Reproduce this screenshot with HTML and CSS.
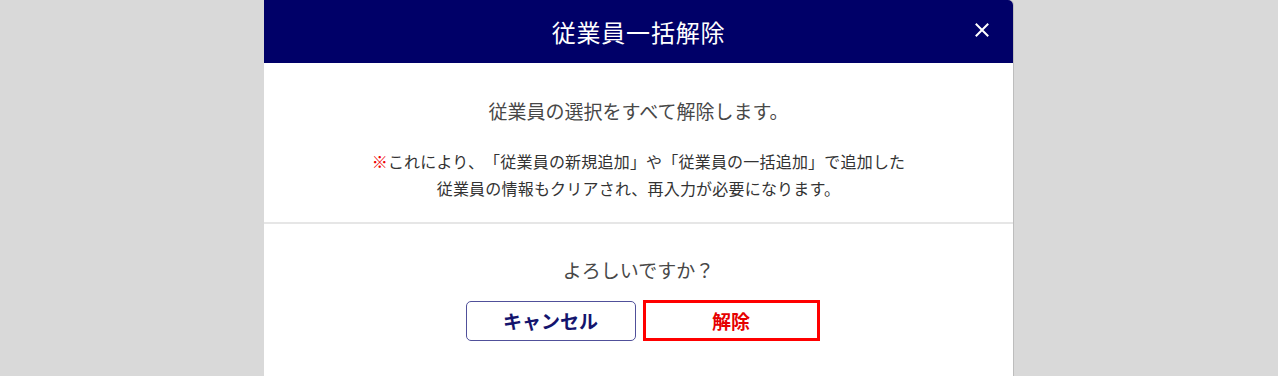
FILE: index.html
```html
<!DOCTYPE html>
<html lang="ja">
<head>
<meta charset="utf-8">
<link rel="stylesheet" href="styles.css">
</head>
<body>
<div class="modal">
  <div class="modal-header">
    <h1 class="title">従業員一括解除</h1>
    <button class="close" aria-label="閉じる">
      <svg width="14" height="14" viewBox="0 0 14 14"><path d="M1.5 1.5 L12.5 12.5 M12.5 1.5 L1.5 12.5" stroke="#fff" stroke-width="2" stroke-linecap="square" fill="none"/></svg>
    </button>
  </div>
  <div class="section info">
    <p class="lead">従業員の選択をすべて解除します。</p>
    <p class="note"><span class="mark">※</span>これにより、「従業員の新規追加」や「従業員の一括追加」で追加した<br>従業員の情報もクリアされ、再入力が必要になります。</p>
  </div>
  <div class="section confirm">
    <p class="lead">よろしいですか？</p>
    <div class="actions">
      <button class="btn btn-cancel">キャンセル</button>
      <button class="btn btn-release">解除</button>
    </div>
  </div>
</div>
</body>
</html>
```

FILE: styles.css
```css
html, body {
  margin: 0;
  padding: 0;
  height: 100%;
}
body {
  background: #d9d9d9;
  font-family: "Noto Sans CJK JP", "Noto Sans", sans-serif;
  overflow: hidden;
  text-spacing-trim: space-all;
}
.modal {
  width: 749px;
  height: 380px;
  margin: 0 auto;
  background: #fff;
  border-radius: 0 5px 5px 5px;
  box-shadow: 1px 0 0 #bdbdbd;
  overflow: hidden;
  position: relative;
  left: -0.5px;
}
.modal-header {
  height: 63px;
  background: #000068;
  display: flex;
  align-items: center;
  justify-content: center;
  position: relative;
}
.title {
  margin: 0;
  color: #fff;
  font-size: 24px;
  font-weight: 400;
  line-height: 1;
  letter-spacing: 0.8px;
}
.close {
  position: absolute;
  right: 24px;
  top: 23px;
  width: 14px;
  height: 14px;
  padding: 0;
  border: 0;
  background: none;
  display: flex;
}
.section {
  text-align: center;
  color: #484848;
}
.info {
  padding: 34px 0 20px;
  border-bottom: 2px solid #e6e6e6;
}
.lead {
  margin: 0;
  font-size: 19px;
  line-height: 27px;
}
.note {
  margin: 24px 0 0;
  font-size: 16px;
  line-height: 27px;
  color: #333333;
  letter-spacing: 0.2px;
}
.mark {
  color: #f00000;
  font-weight: 700;
}
.confirm {
  padding-top: 32px;
}
.actions {
  margin-top: 17px;
  display: flex;
  justify-content: center;
  align-items: center;
  gap: 7px;
  padding-left: 8px;
}
.btn {
  font-family: "Noto Sans CJK JP", "Noto Sans", sans-serif;
  font-size: 19px;
  font-weight: 700;
  background: #fff;
  padding: 0;
  line-height: 1;
}
.btn-cancel {
  width: 170px;
  height: 40px;
  border: 1.5px solid #50509a;
  border-radius: 5px;
  color: #14146e;
}
.btn-release {
  width: 177px;
  height: 41px;
  border: 3px solid #ff0000;
  border-radius: 0;
  color: #e60000;
}
```
